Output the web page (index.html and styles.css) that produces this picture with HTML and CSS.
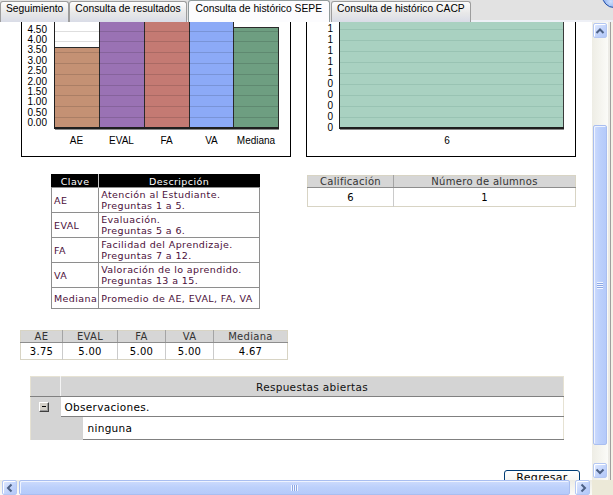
FILE: index.html
```html
<!DOCTYPE html>
<html lang="es">
<head>
<meta charset="utf-8">
<title>Consulta de histórico SEPE</title>
<link rel="stylesheet" href="styles.css">
</head>
<body>
<div class="frame">
  <div class="tabs">
    <div class="tab">Seguimiento</div>
    <div class="tab">Consulta de resultados</div>
    <div class="tab active">Consulta de histórico SEPE</div>
    <div class="tab">Consulta de histórico CACP</div>
    <div class="orb"></div>
  </div>

  <div class="body-row">
    <div class="viewport">
      <div class="page">
        <div class="charts">
          <div class="chart chart-left">
            <svg width="270" height="190" viewBox="0 0 270 190">
              <rect x="0.5" y="0.5" width="269" height="189" fill="#fff" stroke="#000"/>
              <rect x="33.5" y="80.5" width="45" height="80.5" fill="#c49174" stroke="#2a2a2a"/>
              <rect x="78.5" y="53.5" width="45" height="107.5" fill="#9a72b4" stroke="#2a2a2a"/>
              <rect x="123.5" y="53.5" width="45" height="107.5" fill="#c47a73" stroke="#2a2a2a"/>
              <rect x="168.5" y="53.5" width="44" height="107.5" fill="#8caaf7" stroke="#2a2a2a"/>
              <rect x="212.5" y="60.5" width="45" height="100.5" fill="#6e9e81" stroke="#2a2a2a"/>
              <g stroke="rgba(0,0,0,0.13)" stroke-width="1">
                <line x1="34" y1="150.5" x2="257" y2="150.5"/>
                <line x1="34" y1="139.5" x2="257" y2="139.5"/>
                <line x1="34" y1="128.5" x2="257" y2="128.5"/>
                <line x1="34" y1="118.5" x2="257" y2="118.5"/>
                <line x1="34" y1="107.5" x2="257" y2="107.5"/>
                <line x1="34" y1="96.5" x2="257" y2="96.5"/>
                <line x1="34" y1="85.5" x2="257" y2="85.5"/>
                <line x1="34" y1="74.5" x2="257" y2="74.5"/>
                <line x1="34" y1="64.5" x2="257" y2="64.5"/>
              </g>
              <line x1="33.5" y1="30" x2="33.5" y2="161" stroke="#1e1e1e"/>
              <rect x="33" y="160" width="225" height="2" fill="#1e1e1e"/>
              <rect x="34" y="162" width="224" height="1" fill="#8a8a8a"/>
              <g class="axis-text" text-anchor="end">
                <text x="26" y="159.1">0.00</text>
                <text x="26" y="148.7">0.50</text>
                <text x="26" y="138.3">1.00</text>
                <text x="26" y="127.9">1.50</text>
                <text x="26" y="117.5">2.00</text>
                <text x="26" y="107.2">2.50</text>
                <text x="26" y="96.8">3.00</text>
                <text x="26" y="86.4">3.50</text>
                <text x="26" y="76.0">4.00</text>
                <text x="26" y="65.6">4.50</text>
                <text x="26" y="55.2">5.00</text>
              </g>
              <g class="axis-text" text-anchor="middle">
                <text x="55.5" y="176.5">AE</text>
                <text x="100.5" y="176.5">EVAL</text>
                <text x="145.5" y="176.5">FA</text>
                <text x="190.5" y="176.5">VA</text>
                <text x="235" y="176.5">Mediana</text>
              </g>
            </svg>
          </div>
          <div class="chart chart-right">
            <svg width="270" height="190" viewBox="0 0 270 190">
              <rect x="0.5" y="0.5" width="269" height="189" fill="#fff" stroke="#000"/>
              <rect x="33.5" y="40.5" width="224" height="120.5" fill="#a9d1c1" stroke="#3a3a3a"/>
              <g stroke="rgba(0,60,40,0.09)" stroke-width="1">
                <line x1="34" y1="150.5" x2="257" y2="150.5"/>
                <line x1="34" y1="139.5" x2="257" y2="139.5"/>
                <line x1="34" y1="128.5" x2="257" y2="128.5"/>
                <line x1="34" y1="117.5" x2="257" y2="117.5"/>
                <line x1="34" y1="106.5" x2="257" y2="106.5"/>
                <line x1="34" y1="95.5" x2="257" y2="95.5"/>
                <line x1="34" y1="84.5" x2="257" y2="84.5"/>
                <line x1="34" y1="73.5" x2="257" y2="73.5"/>
                <line x1="34" y1="62.5" x2="257" y2="62.5"/>
                <line x1="34" y1="51.5" x2="257" y2="51.5"/>
              </g>
              <line x1="33.5" y1="30" x2="33.5" y2="161" stroke="#1e1e1e"/>
              <rect x="33" y="160" width="225" height="2" fill="#1e1e1e"/>
              <rect x="34" y="162" width="224" height="1" fill="#8a8a8a"/>
              <g class="axis-text" text-anchor="end">
                <text x="27" y="164.1">0</text>
                <text x="27" y="153.1">0</text>
                <text x="27" y="142.1">0</text>
                <text x="27" y="131.1">0</text>
                <text x="27" y="120.1">0</text>
                <text x="27" y="109.1">1</text>
                <text x="27" y="98.1">1</text>
                <text x="27" y="87.1">1</text>
                <text x="27" y="76.1">1</text>
                <text x="27" y="65.1">1</text>
                <text x="27" y="54.1">1</text>
              </g>
              <text class="axis-text" x="141" y="176.5" text-anchor="middle">6</text>
            </svg>
          </div>
        </div>

        <div class="tables">
          <table class="legend">
            <tr><th class="col-key">Clave</th><th>Descripción</th></tr>
            <tr><td>AE</td><td>Atención al Estudiante.<br>Preguntas 1 a 5.</td></tr>
            <tr><td>EVAL</td><td>Evaluación.<br>Preguntas 5 a 6.</td></tr>
            <tr><td>FA</td><td>Facilidad del Aprendizaje.<br>Preguntas 7 a 12.</td></tr>
            <tr><td>VA</td><td>Valoración de lo aprendido.<br>Preguntas 13 a 15.</td></tr>
            <tr class="single"><td>Mediana</td><td>Promedio de AE, EVAL, FA, VA</td></tr>
          </table>

          <table class="grid calif">
            <tr><th class="c-cal">Calificación</th><th>Número de alumnos</th></tr>
            <tr><td>6</td><td>1</td></tr>
          </table>
        </div>

        <table class="grid stats">
          <tr><th class="s-ae">AE</th><th class="s-eval">EVAL</th><th class="s-fa">FA</th><th class="s-va">VA</th><th>Mediana</th></tr>
          <tr><td>3.75</td><td>5.00</td><td>5.00</td><td>5.00</td><td>4.67</td></tr>
        </table>

        <table class="answers">
          <tr><th class="gutter-h"></th><th colspan="2" class="ans-title">Respuestas abiertas</th></tr>
          <tr><td class="gutter"><span class="toggle"></span></td><td colspan="2" class="ans-q">Observaciones.</td></tr>
          <tr><td class="gutter"></td><td class="indent"></td><td class="ans-a">ninguna</td></tr>
        </table>

        <div class="actions">
          <button class="btn" type="button">Regresar</button>
        </div>
      </div>
    </div>

    <div class="vscroll">
      <div class="sb-btn">
        <svg width="12" height="12" viewBox="0 0 12 12"><path d="M2.5 8 L6 4.5 L9.5 8" fill="none" stroke="#4d6185" stroke-width="2"/></svg>
      </div>
      <div class="vtrack">
        <div class="vthumb"><span class="grip-v"></span></div>
      </div>
      <div class="sb-btn">
        <svg width="12" height="12" viewBox="0 0 12 12"><path d="M2.5 4.5 L6 8 L9.5 4.5" fill="none" stroke="#4d6185" stroke-width="2"/></svg>
      </div>
    </div>
    <div class="edge"></div>
  </div>

  <div class="bottom-row">
    <div class="hscroll">
      <div class="sb-btn hbtn">
        <svg width="12" height="12" viewBox="0 0 12 12"><path d="M7.5 2.5 L4 6 L7.5 9.5" fill="none" stroke="#4d6185" stroke-width="2"/></svg>
      </div>
      <div class="hthumb"><span class="grip-h"></span></div>
      <div class="sb-btn hbtn">
        <svg width="12" height="12" viewBox="0 0 12 12"><path d="M4.5 2.5 L8 6 L4.5 9.5" fill="none" stroke="#4d6185" stroke-width="2"/></svg>
      </div>
    </div>
    <div class="corner"></div>
  </div>
</div>
</body>
</html>
```

FILE: styles.css
```css
* { box-sizing: border-box; }

html, body {
  margin: 0;
  padding: 0;
}

body {
  width: 613px;
  height: 495px;
  overflow: hidden;
  background: #fff;
  font-family: "DejaVu Sans", Verdana, sans-serif;
}

.frame {
  position: relative;
  width: 613px;
  height: 495px;
  display: flex;
  flex-direction: column;
  overflow: hidden;
}

/* ---------- tabs ---------- */
.tabs {
  flex: none;
  height: 22px;
  display: flex;
  align-items: stretch;
  background: linear-gradient(#e2e2e2 0 20px, #eef0f6 20px);
  font: 10.3px "Liberation Sans", Arial, sans-serif;
  color: #000;
}

.tab {
  margin-top: 1px;
  padding: 1px 5px 0;
  line-height: 12px;
  border: 1px solid #9d9d9d;
  border-bottom: none;
  border-radius: 3px 3px 0 0;
  background: linear-gradient(#fdfdfd, #e8e8e8 55%, #d9dce7);
  white-space: nowrap;
}

.tab.active {
  margin-top: 0;
  padding: 2px 7px 0 7px;
  margin-left: 1px;
  margin-right: 1px;
  background: #fcfcfe;
  border-color: #919b9c;
}

.orb {
  position: absolute;
  left: 602px;
  top: -16px;
  width: 24px;
  height: 24px;
  border-radius: 50%;
  border: 1px solid #1d4aa6;
  background: radial-gradient(circle at 35% 75%, #cfe0fc, #5d8ee6 60%, #2a5cc4);
}

/* ---------- main area ---------- */
.body-row {
  flex: none;
  height: 458px;
  display: flex;
}

.viewport {
  width: 592px;
  height: 458px;
  overflow: hidden;
  background: #fff;
}

.page {
  margin-top: -55px;
}

.charts {
  display: flex;
  height: 190px;
}

.chart svg { display: block; }

.chart-left { margin-left: 21px; }
.chart-right { margin-left: 15px; }

.axis-text {
  font-family: "Liberation Sans", Arial, sans-serif;
  font-size: 10px;
  fill: #000;
}

.tables {
  display: flex;
  align-items: flex-start;
  margin-top: 17px;
}

/* legend */
.legend {
  margin-left: 51px;
  width: 209px;
  border-collapse: collapse;
  border: 1px solid #000;
  font-size: 9.5px;
  letter-spacing: 0.4px;
  color: #4b0f3a;
}

.legend th {
  background: #000;
  color: #fff;
  font-weight: normal;
  height: 13px;
  line-height: 11px;
  padding: 0;
  border-left: 1px solid #c8c8c8;
}

.legend th.col-key {
  width: 47px;
  border-left: none;
}

.legend td {
  height: 25px;
  padding: 1px 1px 1px 2px;
  line-height: 11px;
  border: 1px solid #8e8e8e;
  vertical-align: middle;
  white-space: nowrap;
}

.legend .single td { height: 21px; }

/* data grids */
.grid {
  border-collapse: collapse;
  border: 1px solid #d8d4c4;
  font-size: 10px;
  letter-spacing: 0.3px;
  color: #000;
}

.grid th {
  background: #d6d6d6;
  color: #333;
  font-weight: normal;
  height: 12px;
  line-height: 11px;
  padding: 0;
  border-bottom: 1px solid #8d8d8d;
  border-left: 1px solid #a4a4a4;
  text-align: center;
}

.grid td {
  padding: 0;
  text-align: center;
  border-left: 1px solid #cbcbcb;
}

.grid th:first-child,
.grid td:first-child { border-left: none; }

.calif {
  margin-left: 47px;
  margin-top: 1px;
  width: 269px;
}

.calif td { height: 19px; }
.c-cal { width: 86px; }

.stats {
  margin-left: 20px;
  margin-top: 21px;
  width: 268px;
}

.stats td { height: 17px; }
.s-ae { width: 42px; }
.s-eval { width: 55px; }
.s-fa { width: 48px; }
.s-va { width: 48px; }

/* open answers */
.answers {
  margin-left: 30px;
  margin-top: 16px;
  width: 534px;
  border-collapse: collapse;
  border: 1px solid #e6e2d3;
  border-bottom: none;
  font-size: 10.5px;
  letter-spacing: 0.3px;
  color: #000;
}

.answers th {
  background: #d4d4d4;
  font-weight: normal;
  height: 20px;
  padding: 0;
  border-bottom: 1px solid #808080;
  color: #111;
}

.gutter-h {
  width: 30px;
  border-right: 1px solid #f4f4f4;
}

.ans-title { text-align: center; }

.gutter {
  width: 30px;
  background: #d4d4d4;
  padding: 0 0 0 8px;
  vertical-align: middle;
}

.indent {
  width: 22px;
  background: #d4d4d4;
}

.ans-q {
  height: 20px;
  padding: 0 0 0 4px;
  border-bottom: 1px solid #808080;
}

.ans-a {
  height: 23px;
  padding: 0 0 0 5px;
  border-bottom: 1px solid #808080;
}

.toggle {
  display: flex;
  align-items: center;
  justify-content: center;
  width: 10px;
  height: 10px;
  background: #d4d0c8;
  border: 1px solid;
  border-color: #fff #404040 #404040 #fff;
  box-shadow: inset -1px -1px 0 #9a9a9a;
}

.toggle::before {
  content: "";
  width: 4px;
  height: 1px;
  background: #000;
}

.actions {
  display: flex;
  justify-content: flex-end;
  padding-right: 12px;
  margin-top: 30px;
}

.btn {
  width: 76px;
  height: 22px;
  padding: 0 0 6px;
  border: 1px solid #003c74;
  border-radius: 3px;
  background: linear-gradient(#ffffff, #f4f3ee 60%, #e3e0d3);
  font: 11px "DejaVu Sans", Verdana, sans-serif;
  letter-spacing: 0.3px;
  line-height: 14px;
  color: #000;
  text-align: center;
}

/* ---------- scrollbars ---------- */
.vscroll {
  width: 16px;
  height: 458px;
  padding: 1px 1px 2px 1px;
  display: flex;
  flex-direction: column;
  background: linear-gradient(to right, #eeede5, #fbfbf8);
}

.sb-btn {
  flex: none;
  width: 14px;
  height: 15px;
  display: flex;
  align-items: center;
  justify-content: center;
  border: 1px solid #b4c7f3;
  border-radius: 2px;
  background: linear-gradient(135deg, #e1eafe, #c0d2fb 60%, #b3c8f8);
  box-shadow: inset 1px 1px 0 #fff;
}

.vtrack {
  flex: 1;
  padding-top: 87px;
}

.vthumb {
  width: 14px;
  height: 320px;
  display: flex;
  align-items: center;
  justify-content: center;
  border: 1px solid #a9bef0;
  border-radius: 2px;
  background: linear-gradient(to right, #cddbfd, #bcd0fb 50%, #b5cafa);
  box-shadow: inset 1px 1px 0 #eef3ff;
}

.grip-v {
  width: 6px;
  height: 7px;
  background: repeating-linear-gradient(#f2f6ff 0 1px, #8da8e4 1px 2px);
}

.edge {
  width: 5px;
  height: 458px;
  background: linear-gradient(to right, #ecebe6 0 2px, #9f9f9f 2px 3px, #f3f1e7 3px);
}

.bottom-row {
  flex: none;
  height: 15px;
  display: flex;
}

.hscroll {
  width: 592px;
  height: 15px;
  display: flex;
  align-items: stretch;
  padding: 0 1px 0 2px;
  background: linear-gradient(#eeede5, #fbfbf8);
}

.hbtn {
  width: 15px;
  height: 15px;
}

.hthumb {
  width: 551px;
  margin: 0 5px 0 2px;
  display: flex;
  align-items: center;
  justify-content: center;
  border: 1px solid #a9bef0;
  border-radius: 2px;
  background: linear-gradient(#cddbfd, #bcd0fb 50%, #b5cafa);
  box-shadow: inset 1px 1px 0 #eef3ff;
}

.grip-h {
  width: 7px;
  height: 6px;
  background: repeating-linear-gradient(to right, #f2f6ff 0 1px, #8da8e4 1px 2px);
}

.corner {
  flex: 1;
  background: #ece9d8;
}
```
